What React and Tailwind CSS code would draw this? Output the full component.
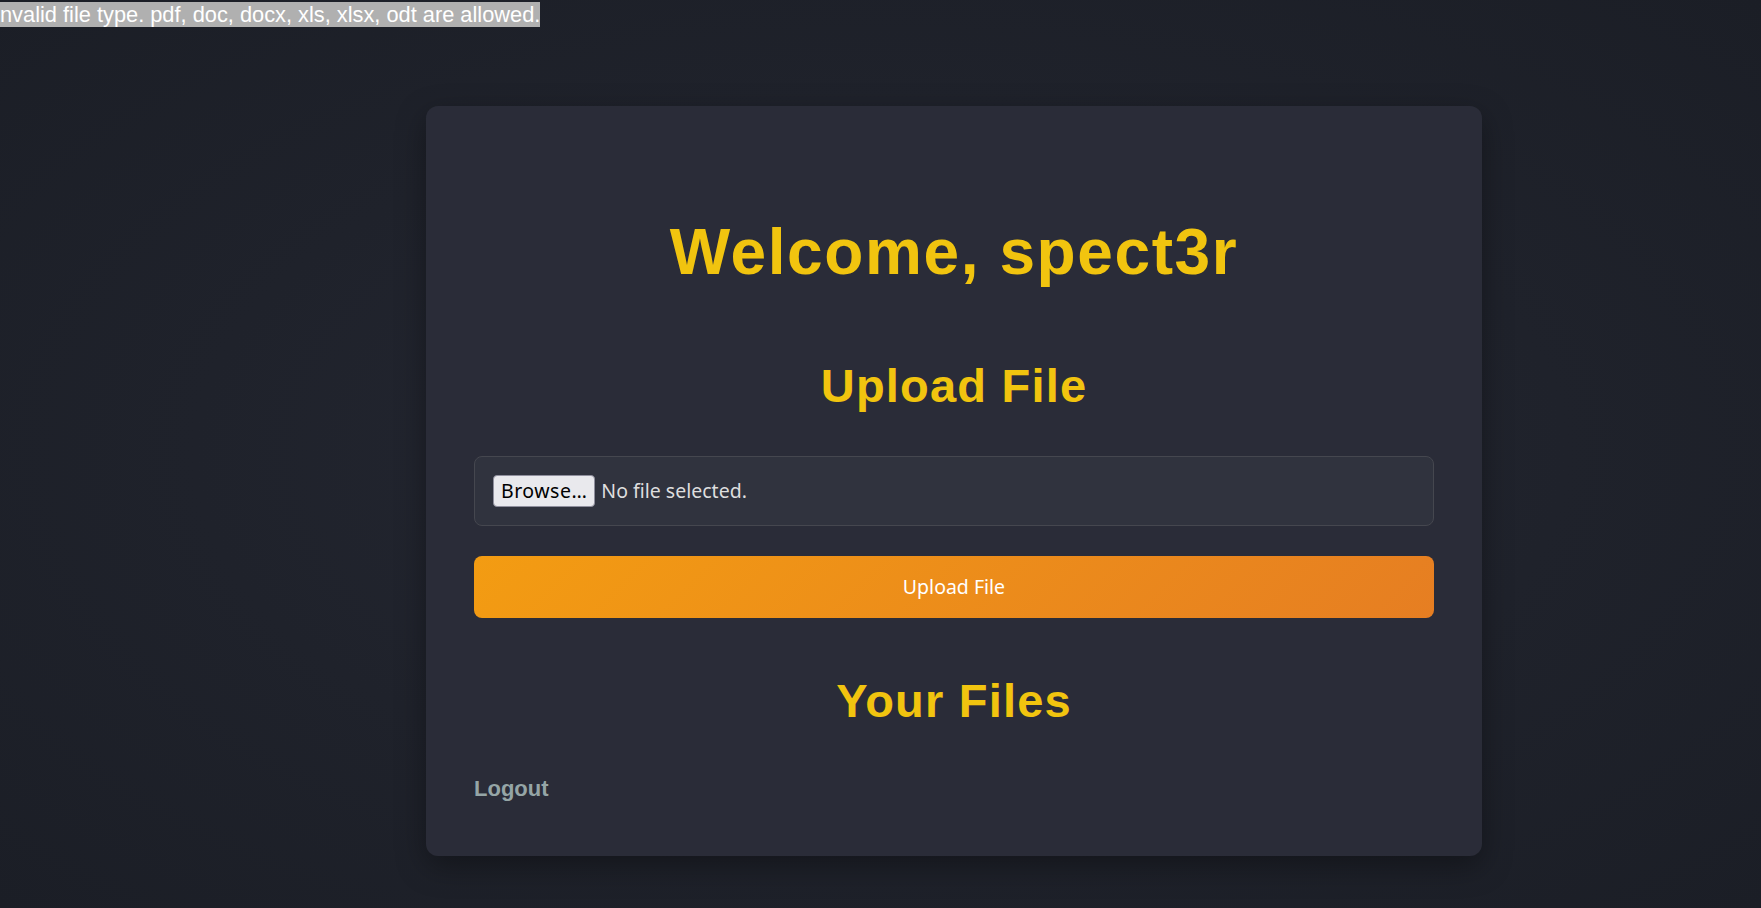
import React from "react";

export default function App() {
  return (
    <div className="relative min-h-[908px] w-full overflow-hidden bg-[radial-gradient(ellipse_at_center,#252833_0%,#1f222b_55%,#1b1e26_100%)]">
      <div className="absolute left-0 top-[2px] whitespace-nowrap">
        <span className="inline-block bg-[#b0b0b0] text-white text-[21.8px] leading-[25px] font-['Liberation_Sans',Arial,sans-serif]">
          nvalid file type. pdf, doc, docx, xls, xlsx, odt are allowed.
        </span>
      </div>

      <div className="flex pl-[426px] pt-[106px] pb-[52px]">
        <div className="w-[1056px] rounded-[12px] bg-[#2a2c38] shadow-[0_10px_30px_rgba(0,0,0,0.35)] px-[48px] pt-[109px] pb-[53px] flex flex-col font-['Liberation_Sans',Arial,sans-serif]">
          <h1 className="text-center text-[64px] leading-[74px] font-bold tracking-[1.6px] text-[#f1c40f]">
            Welcome, spect3r
          </h1>
          <h2 className="mt-[69px] text-center text-[47px] leading-[56px] font-bold tracking-[1.2px] text-[#f1c40f]">
            Upload File
          </h2>
          <div className="mt-[42px] h-[70px] rounded-[8px] border border-[#45474f] bg-[#30333e] px-[18px] flex items-center">
            <span className="h-[32px] px-[7px] flex items-center rounded-[4px] border border-[#8f8f9d] bg-[#e9e9ed] text-black text-[19.5px] tracking-[0.5px] font-['Noto_Sans',sans-serif]">
              Browse…
            </span>
            <span className="ml-[6px] text-[#dedede] text-[19.5px] font-['Noto_Sans',sans-serif]">
              No file selected.
            </span>
          </div>
          <button className="mt-[30px] h-[62px] w-full rounded-[8px] bg-[linear-gradient(135deg,#f39c12,#e67e22)] text-white text-[19.5px] font-['Noto_Sans',sans-serif]">
            Upload File
          </button>
          <h2 className="mt-[55px] text-center text-[47px] leading-[56px] font-bold tracking-[1.2px] text-[#f1c40f]">
            Your Files
          </h2>
          <div className="mt-[47px]">
            <a className="text-[22px] leading-[26px] font-bold text-[#95a5a6]">Logout</a>
          </div>
        </div>
      </div>
    </div>
  );
}
